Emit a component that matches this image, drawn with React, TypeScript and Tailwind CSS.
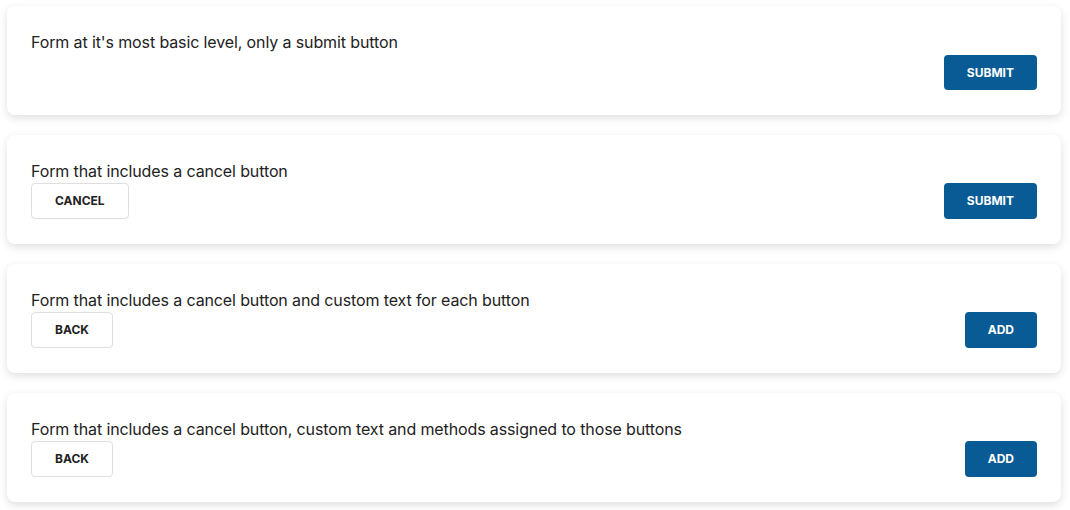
const forms = [
  { title: "Form at it's most basic level, only a submit button", cancel: null, submit: 'Submit' },
  { title: 'Form that includes a cancel button', cancel: 'Cancel', submit: 'Submit' },
  { title: 'Form that includes a cancel button and custom text for each button', cancel: 'Back', submit: 'Add' },
  {
    title: 'Form that includes a cancel button, custom text and methods assigned to those buttons',
    cancel: 'Back',
    submit: 'Add',
  },
]

function FormCard({ title, cancel, submit }: { title: string; cancel: string | null; submit: string }) {
  return (
    <form
      className="bg-white rounded-lg shadow-[0_3px_8px_rgba(0,0,0,0.13)] px-6 pt-6 pb-[25px]"
      onSubmit={e => e.preventDefault()}
    >
      <p className="text-[16px] leading-6 tracking-[-0.12px] text-[#222]">{title}</p>
      <div className={`flex items-center ${cancel ? 'justify-between' : 'justify-end mt-[1px]'}`}>
        {cancel && (
          <button
            type="button"
            className="h-9 px-[23px] rounded border border-[#dedede] bg-white text-[12px] font-bold uppercase text-[#222]"
          >
            {cancel}
          </button>
        )}
        <button
          type="submit"
          className={`${cancel ? 'h-9' : 'h-[35px]'} px-[23px] rounded bg-[#085b95] text-[12px] font-bold uppercase text-white`}
        >
          {submit}
        </button>
      </div>
    </form>
  )
}

export default function App() {
  return (
    <div className="min-h-screen bg-white pl-[7px] pr-[9px] pt-[6px] flex flex-col gap-5 font-['Inter',sans-serif]">
      {forms.map(f => (
        <FormCard key={f.title} {...f} />
      ))}
    </div>
  )
}
